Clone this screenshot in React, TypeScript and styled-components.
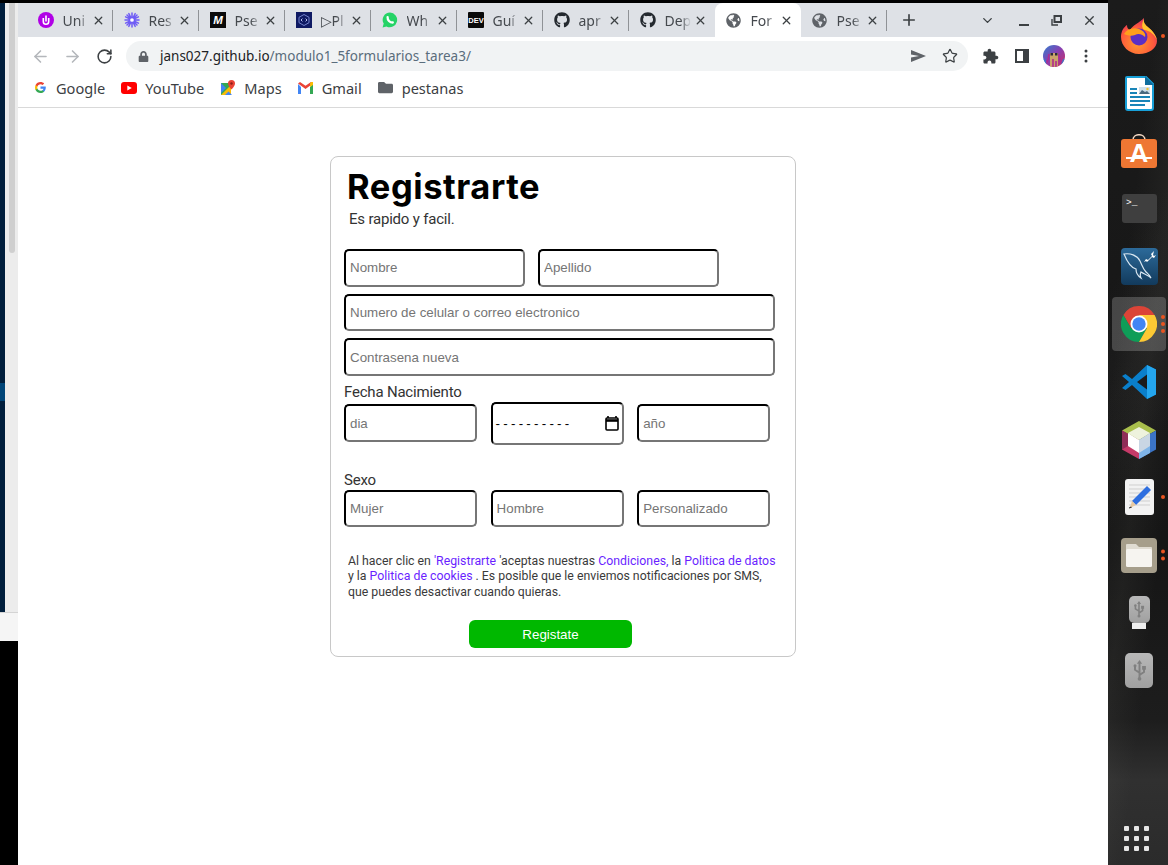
import React, { ReactElement } from 'react';
import styled, { createGlobalStyle } from 'styled-components';
import { ArrowLeft, ArrowRight, ChevronDown, Plus, RotateCw, Star, X } from 'lucide-react';
import { FaFolder, FaGithub, FaGlobeAmericas, FaLock } from 'react-icons/fa';

const GlobalStyle = createGlobalStyle`
  html, body {
    margin: 0;
    height: 100%;
    overflow: hidden;
    background: #fff;
  }

  #root {
    height: 100%;
  }

  * {
    box-sizing: border-box;
  }
`;

const Page = styled.div`
  display: flex;
  height: 865px;
  width: 1168px;
`;

/* window behind the browser, left side */
const LeftEdge = styled.div`
  width: 18px;
  display: flex;
  flex-direction: column;
  background: #000;
  padding-top: 3px;
`;

const BehindWindow = styled.div`
  display: flex;
  height: 609px;
  background: #ececec;
`;

const NavyStrip = styled.div`
  width: 5px;
  background: #001e3c;
  padding-top: 380px;
`;

const NavyHighlight = styled.div`
  height: 18px;
  background: #004578;
`;

const Rail = styled.div`
  flex: 1;
  padding: 0 3px 0 4px;
`;

const RailThumb = styled.div`
  height: 250px;
  background: #cfcfcf;
  border-radius: 0 0 3px 3px;
`;

const BehindFooter = styled.div`
  height: 29px;
  background: #f5f5f5;
  border-top: 1px solid #d4d4d4;
`;

const Browser = styled.div`
  flex: 1;
  min-width: 0;
  display: flex;
  flex-direction: column;
`;

const TopEdge = styled.div`
  height: 3px;
  background: #000;
`;

const TabStrip = styled.div`
  height: 34px;
  display: flex;
  align-items: stretch;
  background: #dee1e6;
  padding-left: 8.5px;
`;

const Tab = styled.div<{ $active?: boolean; $separator?: boolean }>`
  position: relative;
  width: 86px;
  display: flex;
  align-items: center;
  padding-left: 11px;
  background: ${(props) => (props.$active ? '#fff' : 'transparent')};
  border-radius: 8px 8px 0 0;
  color: #45494e;

  &::after {
    content: '';
    display: ${(props) => (props.$separator ? 'block' : 'none')};
    position: absolute;
    right: 0;
    top: 7px;
    bottom: 6px;
    width: 1px;
    background: #8f9296;
  }
`;

const TabIcon = styled.span`
  width: 16px;
  height: 16px;
  flex: none;
  display: flex;
  align-items: center;
  justify-content: center;
`;

const TabTitle = styled.span`
  width: 26px;
  margin-left: 9px;
  overflow: hidden;
  white-space: nowrap;
  font: 14px 'Noto Sans', sans-serif;
  -webkit-mask-image: linear-gradient(to right, #000 60%, transparent 100%);
  mask-image: linear-gradient(to right, #000 60%, transparent 100%);
`;

const TabClose = styled.span`
  display: flex;
  margin-left: 3px;
  color: #3c4043;
`;

const StripButton = styled.div<{ $width: number; $gap?: number }>`
  width: ${(props) => props.$width}px;
  margin-left: ${(props) => props.$gap ?? 0}px;
  display: flex;
  align-items: center;
  justify-content: center;
  color: #3c4043;
`;

const MinimizeGlyph = styled.span`
  width: 10px;
  height: 2px;
  margin-top: 10px;
  background: #3c4043;
`;

const Toolbar = styled.div`
  height: 38px;
  display: flex;
  align-items: center;
  padding-left: 6px;
  background: #fff;
`;

const ToolButton = styled.div<{ $color?: string }>`
  width: 32px;
  height: 32px;
  flex: none;
  display: flex;
  align-items: center;
  justify-content: center;
  color: ${(props) => props.$color ?? '#5f6368'};
`;

const Omnibox = styled.div`
  width: 842px;
  height: 30px;
  margin: 0 6px;
  padding: 0 2px 0 12px;
  display: flex;
  align-items: center;
  border-radius: 15px;
  background: #f1f3f4;
  color: #5f6368;
`;

const Url = styled.div`
  flex: 1;
  margin: 0 0 1px 11px;
  font: 13.5px 'Noto Sans', sans-serif;
  color: #5a6d7c;

  b {
    font-weight: 400;
    color: #202124;
  }
`;

const Bookmarks = styled.div`
  height: 33px;
  display: flex;
  align-items: center;
  gap: 16px;
  padding: 0 0 7px 14px;
  background: #fff;
  border-bottom: 1px solid #d9d9d9;
`;

const Bookmark = styled.div`
  display: flex;
  align-items: center;
  gap: 8px;
  font: 14.6px 'Noto Sans', sans-serif;
  color: #3c4043;
`;

const BookmarkIcon = styled.span`
  width: 16px;
  height: 16px;
  display: flex;
  align-items: center;
  justify-content: center;
  color: #5f6368;
`;

const Content = styled.main`
  flex: 1;
  padding: 48px 0 0 312px;
  background: #fff;
`;

const Card = styled.form`
  width: 466px;
  height: 501px;
  padding: 9px 0 0 13px;
  border: 1px solid #c8c8c8;
  border-radius: 8px;
  background: #fff;
`;

const Title = styled.h1`
  margin: 0 0 0 3px;
  font: 700 34.5px/42px Inter, sans-serif;
  letter-spacing: 0.55px;
  color: #000;
`;

const Subtitle = styled.p`
  margin: 1px 0 0 5px;
  font: 15px/20px Roboto, sans-serif;
  letter-spacing: -0.2px;
  color: #333;
`;

const FieldRow = styled.div<{ $top: number; $gap?: number }>`
  display: flex;
  align-items: flex-start;
  gap: ${(props) => props.$gap ?? 13.6}px;
  margin-top: ${(props) => props.$top}px;
`;

const Field = styled.input<{ $width: number; $height?: number; $lift?: boolean }>`
  width: ${(props) => props.$width}px;
  height: ${(props) => props.$height ?? 38}px;
  padding: ${(props) => (props.$lift ? '0 4px 1px' : '1px 4px')};
  border: 2px inset #767676;
  border-top-color: #222;
  border-left-color: #222;
  border-radius: 5px;
  background: #fff;
  font: 13.33px 'Liberation Sans', Arial, sans-serif;
  color: #000;

  &::placeholder {
    color: #757575;
    opacity: 1;
  }
`;

const DateField = styled.div`
  width: 133px;
  height: 43px;
  margin: -2px 0 -3px;
  padding: 0 3px;
  display: flex;
  align-items: center;
  justify-content: space-between;
  border: 2px inset #767676;
  border-top-color: #222;
  border-left-color: #222;
  border-radius: 5px;
  font: 13.33px 'Liberation Sans', Arial, sans-serif;
  letter-spacing: 3.25px;
  color: #000;
`;

const FieldLabel = styled.div<{ $top: number }>`
  margin-top: ${(props) => props.$top}px;
  font: 15px/20px Roboto, sans-serif;
  letter-spacing: -0.2px;
  color: #333;
`;

const Terms = styled.p`
  margin: 26.5px 0 0 4px;
  font: 12.3px/15.8px Roboto, sans-serif;
  white-space: nowrap;
  color: #3a3a3a;

  a {
    color: #6a1fff;
    text-decoration: none;
  }
`;

const SubmitButton = styled.button`
  display: block;
  width: 163px;
  height: 28px;
  margin: 19.5px 0 0 125px;
  border: 0;
  border-radius: 6px;
  background: #00b800;
  color: #fff;
  font: 13.33px 'Liberation Sans', Arial, sans-serif;
`;

const Dock = styled.aside`
  width: 60px;
  padding: 7px 0 0 4px;
  display: flex;
  flex-direction: column;
  background:
    linear-gradient(97deg, transparent 30%, rgba(130, 130, 120, 0.09) 52%, transparent 72%),
    linear-gradient(118deg, transparent 30%, rgba(120, 120, 120, 0.06) 42%, transparent 55%),
    linear-gradient(to bottom, #1b1b1b 0, #151515 540px, #1d1d1d 720px, #303030 780px, #2b2b2b 100%);
`;

const DockItem = styled.div<{ $active?: boolean }>`
  position: relative;
  flex: none;
  width: 54px;
  height: 57.7px;
  display: flex;
  align-items: center;
  justify-content: center;

  ${(props) =>
    props.$active &&
    `
    &::before {
      content: '';
      position: absolute;
      inset: 2px 0;
      border-radius: 4px;
      background: rgba(255, 255, 255, 0.2);
    }
  `}

  > svg {
    position: relative;
  }
`;

const RunningDots = styled.div`
  position: absolute;
  right: 1px;
  top: 50%;
  transform: translateY(-50%);
  display: flex;
  flex-direction: column;
  gap: 3px;
`;

const RunningDot = styled.span`
  width: 4px;
  height: 4px;
  border-radius: 50%;
  background: #e95420;
`;

const UsbTile = styled.div<{ $width: number; $height: number }>`
  width: ${(props) => props.$width}px;
  height: ${(props) => props.$height}px;
  display: flex;
  align-items: center;
  justify-content: center;
  border-radius: 5px;
  background: linear-gradient(#b8b8b8, #a0a0a0);
`;

const UsbStack = styled.div`
  display: flex;
  flex-direction: column;
  align-items: center;
`;

const UsbTag = styled.div`
  width: 14px;
  height: 6px;
  background: #eee;
`;

const AppGrid = styled.div`
  margin: auto 0 14px 12px;
  width: 30px;
  display: grid;
  grid-template-columns: repeat(3, 5px);
  gap: 5px;
`;

const AppGridDot = styled.span`
  width: 5px;
  height: 5px;
  border-radius: 1px;
  background: #e6e6e6;
`;

const UniIcon = (): ReactElement => (
  <svg width="16" height="16" viewBox="0 0 16 16">
    <circle cx="8" cy="8" r="8" fill="#b000e6" />
    <path d="M5.3 6v3.6a2.7 2.7 0 0 0 5.4 0V6" fill="none" stroke="#fff" strokeWidth="1.6" />
    <path d="M8 3.5v6" stroke="#fff" strokeWidth="1.6" />
  </svg>
);

const BurstIcon = (): ReactElement => (
  <svg width="16" height="16" viewBox="0 0 16 16" stroke="#6f5cf5" strokeWidth="1.5" strokeLinecap="round">
    <path d="M8 1v14M1 8h14M3 3l10 10M13 3L3 13M4.8 1.6l6.4 12.8M11.2 1.6L4.8 14.4M1.6 4.8l12.8 6.4M1.6 11.2l12.8-6.4" />
    <circle cx="8" cy="8" r="2.6" fill="#fff" stroke="#6f5cf5" />
  </svg>
);

const MediumIcon = (): ReactElement => (
  <svg width="16" height="16" viewBox="0 0 16 16">
    <rect width="16" height="16" fill="#0b0b0b" />
    <text x="8" y="12" textAnchor="middle" fontFamily="Liberation Sans" fontStyle="italic" fontWeight="700" fontSize="11.5" fill="#fff">
      M
    </text>
  </svg>
);

const HexIcon = (): ReactElement => (
  <svg width="16" height="16" viewBox="0 0 16 16">
    <rect width="16" height="16" fill="#0f1a63" />
    <path d="M8 2.5l5 2.8v5.4l-5 2.8-5-2.8V5.3z" fill="none" stroke="#7f8fd8" strokeWidth="0.9" />
    <path d="M6.4 6.6L5 8l1.4 1.4M9.6 6.6L11 8 9.6 9.4" fill="none" stroke="#cdd5ff" strokeWidth="0.9" />
  </svg>
);

const WhatsappIcon = (): ReactElement => (
  <svg width="16" height="16" viewBox="0 0 16 16">
    <path d="M8 .6a7.3 7.3 0 0 0-6.3 11L.6 15.4l3.9-1A7.3 7.3 0 1 0 8 .6z" fill="#25d366" />
    <path d="M5.6 5.2c-.2 3 2.1 5.3 5.2 5.3" fill="none" stroke="#fff" strokeWidth="2.3" strokeLinecap="round" />
  </svg>
);

const DevIcon = (): ReactElement => (
  <svg width="16" height="16" viewBox="0 0 16 16">
    <rect width="16" height="16" rx="1" fill="#0a0a0a" />
    <text x="8" y="10.8" textAnchor="middle" fontFamily="Liberation Sans" fontWeight="700" fontSize="7.5" fill="#fff">
      DEV
    </text>
  </svg>
);

const GoogleIcon = (): ReactElement => (
  <svg width="11" height="11" viewBox="0 0 18 18">
    <path fill="#4285F4" d="M17.64 9.2c0-.637-.057-1.251-.164-1.84H9v3.481h4.844c-.209 1.125-.843 2.078-1.796 2.717v2.258h2.908c1.702-1.567 2.684-3.874 2.684-6.615z" />
    <path fill="#34A853" d="M9 18c2.43 0 4.467-.806 5.956-2.18l-2.908-2.259c-.806.54-1.837.86-3.048.86-2.344 0-4.328-1.584-5.036-3.711H.957v2.332C2.438 15.983 5.482 18 9 18z" />
    <path fill="#FBBC05" d="M3.964 10.71c-.18-.54-.282-1.117-.282-1.71s.102-1.17.282-1.71V4.958H.957C.347 6.173 0 7.548 0 9s.348 2.827.957 4.042l3.007-2.332z" />
    <path fill="#EA4335" d="M9 3.58c1.321 0 2.508.454 3.44 1.345l2.582-2.58C13.463.891 11.426 0 9 0 5.482 0 2.438 2.017.957 4.958L3.964 7.29C4.672 5.163 6.656 3.58 9 3.58z" />
  </svg>
);

const YoutubeIcon = (): ReactElement => (
  <svg width="16" height="12" viewBox="0 0 16 12">
    <rect width="16" height="12" rx="3" fill="#f00" />
    <path d="M6.3 3.4L10.8 6 6.3 8.6z" fill="#fff" />
  </svg>
);

const MapsIcon = (): ReactElement => (
  <svg width="16" height="16" viewBox="0 0 16 16">
    <path d="M1 3h10v12H1z" fill="#34a853" />
    <path d="M1 15L11 5v10z" fill="#fbbc04" />
    <path d="M1 3l5 5-5 5z" fill="#4285f4" />
    <path d="M5 15l3.5-3.5 3.5 3.5z" fill="#4285f4" />
    <path d="M11.5 0a3.5 3.5 0 0 0-3.5 3.5C8 6 11.5 9.5 11.5 9.5S15 6 15 3.5A3.5 3.5 0 0 0 11.5 0z" fill="#ea4335" />
    <circle cx="11.5" cy="3.5" r="1.2" fill="#8c1d18" />
  </svg>
);

const GmailIcon = (): ReactElement => (
  <svg width="15" height="12" viewBox="0 0 15 12">
    <path d="M0 2v10h3V5z" fill="#4285f4" />
    <path d="M12 5v7h3V2z" fill="#34a853" />
    <path d="M0 1.5L7.5 7 15 1.5 13 0 7.5 3.8 2 0z" fill="#ea4335" />
    <path d="M12 1.5V5l3-2V1.4A1 1 0 0 0 13 0z" fill="#fbbc04" />
  </svg>
);

const SendIcon = (): ReactElement => (
  <svg width="15" height="12" viewBox="0 0 15 12" fill="currentColor">
    <path d="M0 0l15 6L0 12V7.4L8 6 0 4.6z" />
  </svg>
);

const ExtensionIcon = (): ReactElement => (
  <svg width="17" height="17" viewBox="0 0 24 24" fill="#3c4043">
    <path d="M20.5 11H19V7c0-1.1-.9-2-2-2h-4V3.5C13 2.12 11.88 1 10.5 1S8 2.12 8 3.5V5H4c-1.1 0-1.99.9-1.99 2v3.8H3.5c1.49 0 2.7 1.21 2.7 2.7s-1.21 2.7-2.7 2.7H2V20c0 1.1.9 2 2 2h3.8v-1.5c0-1.49 1.21-2.7 2.7-2.7 1.49 0 2.7 1.21 2.7 2.7V22H17c1.1 0 2-.9 2-2v-4h1.5c1.38 0 2.5-1.12 2.5-2.5S21.88 11 20.5 11z" />
  </svg>
);

const RestoreIcon = (): ReactElement => (
  <svg width="11" height="11" viewBox="0 0 11 11" fill="none" stroke="#3c4043">
    <rect x="3.5" y="1" width="6.5" height="6" strokeWidth="2" />
    <path d="M1 4v6h6" strokeWidth="1.4" />
  </svg>
);

const SidePanelIcon = (): ReactElement => (
  <svg width="14" height="14" viewBox="0 0 14 14">
    <rect x="1" y="1" width="12" height="12" fill="none" stroke="#3c4043" strokeWidth="2" />
    <rect x="8" y="1" width="5" height="12" fill="#3c4043" />
  </svg>
);

const Avatar = (): ReactElement => (
  <svg width="22" height="22" viewBox="0 0 22 22">
    <defs>
      <linearGradient id="avatarFill" x1="0" y1="0" x2="1" y2="1">
        <stop offset="0" stopColor="#2f7fd0" />
        <stop offset="0.5" stopColor="#8a3fb0" />
        <stop offset="1" stopColor="#d0305f" />
      </linearGradient>
      <clipPath id="avatarClip">
        <circle cx="11" cy="11" r="11" />
      </clipPath>
    </defs>
    <g clipPath="url(#avatarClip)">
      <rect width="22" height="22" fill="url(#avatarFill)" />
      <path d="M7 22V8h8v14z" fill="#c9a36a" />
      <path d="M7.5 8H10v2.5H7.5zM12 8h2.5v2.5H12z" fill="#2a2a3a" />
      <path d="M3 19c2-3 3-6 3-10M19 19c-2-3-3-6-3-10M10 22v-8M13 22v-6" stroke="#b02a90" strokeWidth="1.6" fill="none" />
      <path d="M1 14c1 2 2 4 2 7M21 14c-1 2-2 4-2 7" stroke="#2f7fd0" strokeWidth="1.6" fill="none" />
    </g>
  </svg>
);

const KebabIcon = (): ReactElement => (
  <svg width="4" height="14" viewBox="0 0 4 14" fill="#3c4043">
    <circle cx="2" cy="2" r="1.5" />
    <circle cx="2" cy="7" r="1.5" />
    <circle cx="2" cy="12" r="1.5" />
  </svg>
);

const CalendarIcon = (): ReactElement => (
  <svg width="14" height="15" viewBox="0 0 14 15">
    <path d="M3 0v2M11 0v2" stroke="#000" strokeWidth="1.6" />
    <rect x="1" y="2" width="12" height="12" rx="1" fill="none" stroke="#000" strokeWidth="1.6" />
    <path d="M1 4.5h12" stroke="#000" strokeWidth="2.6" />
  </svg>
);

const UsbGlyph = ({ size }: { size: number }): ReactElement => (
  <svg width={size} height={size * 1.4} viewBox="0 0 20 28" fill="none" stroke="#808080" strokeWidth="2.6" strokeLinecap="round">
    <path d="M10 4v19M10 17l-6-4V9M10 20l6-4v-4" />
    <path d="M10 0l3.5 5h-7z" fill="#808080" stroke="none" />
    <circle cx="4" cy="7.5" r="2" fill="#808080" stroke="none" />
    <rect x="13.5" y="8" width="5" height="5" fill="#808080" stroke="none" />
    <circle cx="10" cy="25" r="2.5" fill="#808080" stroke="none" />
  </svg>
);

const FirefoxIcon = (): ReactElement => (
  <svg width="36" height="38" viewBox="0 0 36 38">
    <defs>
      <radialGradient id="ffBody" cx="0.45" cy="0.7" r="0.75">
        <stop offset="0" stopColor="#ff9a2e" />
        <stop offset="0.6" stopColor="#ff5a3c" />
        <stop offset="1" stopColor="#d6206a" />
      </radialGradient>
    </defs>
    <path d="M18 37C8 37 0 29 0 20 0 14 3 10 6 8c0 3 1 4 3 5 3-5 9-7 14-12-1 4 1 7 5 10 5 4 8 9 8 13 0 7-8 13-18 13z" fill="url(#ffBody)" />
    <path d="M23 1c-1 4 1 7 5 10 4 3 7 8 8 12-3-6-7-9-12-10-3-.5-4-5-1-12z" fill="#ffc62e" />
    <circle cx="18" cy="20" r="8.5" fill="#5b2fc4" />
    <path d="M3 17c3-5 9-7 15-5 5 2 7 5 6 8-3-3-7-4-10-2-3 1-7 1-11-1z" fill="#ff9f1c" />
  </svg>
);

const WriterIcon = (): ReactElement => (
  <svg width="29" height="35" viewBox="0 0 29 35">
    <path d="M2 1h19l7 7v24a2 2 0 0 1-2 2H3a2 2 0 0 1-2-2V2a1 1 0 0 1 1-1z" fill="#fff" stroke="#18a0d8" strokeWidth="2" />
    <path d="M20 0l9 9h-9z" fill="#0f6d9e" />
    <path d="M5 12h7v2H5zM5 16h7v2H5zM5 20h20v2H5zM5 24h20v2H5zM5 28h15v2H5z" fill="#1a85b8" />
    <rect x="14" y="11" width="11" height="7" fill="#cfe0ea" />
    <path d="M14 18l3-4 3 2 2-1 3 3z" fill="#4a6a80" />
    <circle cx="22.5" cy="13" r="1.2" fill="#f2c230" />
  </svg>
);

const SoftwareIcon = (): ReactElement => (
  <svg width="36" height="34" viewBox="0 0 36 34">
    <path d="M12 6c0-7 12-7 12 0" fill="none" stroke="#f0d5c0" strokeWidth="1.6" />
    <rect y="5" width="36" height="29" rx="3" fill="#ee7733" />
    <text x="18" y="28" textAnchor="middle" fontFamily="Liberation Sans" fontWeight="700" fontSize="26" fill="#fff">
      A
    </text>
    <path d="M5 24h26" stroke="#fff" strokeWidth="2" />
  </svg>
);

const TerminalIcon = (): ReactElement => (
  <svg width="35" height="29" viewBox="0 0 35 29">
    <rect width="35" height="29" rx="3" fill="#3f3f3f" />
    <text x="4" y="11" fontFamily="Liberation Mono" fontSize="9.5" fill="#fff">
      {'>_'}
    </text>
  </svg>
);

const WorkbenchIcon = (): ReactElement => (
  <svg width="37" height="37" viewBox="0 0 37 37">
    <defs>
      <linearGradient id="wbFill" x1="0" y1="0" x2="0" y2="1">
        <stop offset="0" stopColor="#2c6a9a" />
        <stop offset="1" stopColor="#123a5c" />
      </linearGradient>
    </defs>
    <rect width="37" height="37" rx="4" fill="url(#wbFill)" />
    <path d="M3 6c6-1 13 1 16 7 2 4 3 8 6 11 2 2 4 3 5 6-3-3-7-4-10-6-1 2-1 4 0 6-3-2-5-5-5-9-4-1-8-5-12-15z" fill="none" stroke="#dbe8f2" strokeWidth="1.2" />
    <path d="M33 3l-3 3 1 2-4 4-2-1-2 3 2-1 1 1 5-5 2 1 2-3-2 1-1-1z" fill="#fff" />
  </svg>
);

const ChromeIcon = (): ReactElement => (
  <svg width="36" height="36" viewBox="0 0 36 36">
    <path d="M2.41 9A18 18 0 0 1 33.59 9H18L10.2 22.5z" fill="#db4437" />
    <path d="M2.41 9A18 18 0 0 0 18 36l7.8-13.5H10.2z" fill="#0f9d58" />
    <path d="M33.59 9A18 18 0 0 1 18 36l7.8-13.5L18 9z" fill="#fcc934" />
    <circle cx="18" cy="18" r="8.5" fill="#fff" />
    <circle cx="18" cy="18" r="6.7" fill="#4285f4" />
  </svg>
);

const VscodeIcon = (): ReactElement => (
  <svg width="34" height="34" viewBox="0 0 34 34">
    <path d="M25 0l9 4.5v25L25 34 10 20l-6.5 5L0 23l7-6-7-6 3.5-2L10 14z" fill="#0a7fcb" />
    <path d="M25 0l9 4.5v25L25 34z" fill="#24a6ee" />
    <path d="M25 9.5L15 17l10 7.5z" fill="#1b1b1b" />
  </svg>
);

const NetbeansIcon = (): ReactElement => (
  <svg width="34" height="38" viewBox="0 0 34 38">
    <path d="M17 0l17 9.5L17 19 0 9.5z" fill="#a9bf4c" />
    <path d="M34 9.5v19L17 38V19z" fill="#3b74c6" />
    <path d="M0 9.5v19L17 38V19z" fill="#c53a68" />
    <path d="M0 9.5v19l6-3.5V13z" fill="#8f2d57" />
    <path d="M17 38l11-6V19H17z" fill="#7fb4e8" />
    <path d="M17 6l11 6-11 7-11-7z" fill="#eef2dd" />
    <path d="M6 12l11 7v13L6 25z" fill="#fff" />
    <path d="M28 12v13l-11 7V19z" fill="#c9d6e4" />
  </svg>
);

const EditorIcon = (): ReactElement => (
  <svg width="29" height="36" viewBox="0 0 29 36">
    <rect width="29" height="36" rx="3" fill="#f2f2f2" />
    <path d="M4 6h21M4 10h21M4 14h21M4 18h21M4 22h21M4 26h21" stroke="#cfcfcf" strokeWidth="1" />
    <path d="M22 7l4 4-15 15-4-4z" fill="#2f6fe0" />
    <path d="M7 22l4 4-6 3z" fill="#e8c9a0" />
    <path d="M4 28.5l2-1 1 1-3 1z" fill="#333" />
  </svg>
);

const FilesIcon = (): ReactElement => (
  <svg width="36" height="35" viewBox="0 0 36 35">
    <rect width="36" height="35" rx="4" fill="#a69e8b" />
    <path d="M5 7a1 1 0 0 1 1-1h9l3 3h12a1 1 0 0 1 1 1v4H5z" fill="#e0dcd2" />
    <rect x="5" y="11" width="26" height="18" rx="1.5" fill="#f6f4f0" />
  </svg>
);

const tabs = [
  { title: 'Uni', icon: <UniIcon /> },
  { title: 'Res', icon: <BurstIcon /> },
  { title: 'Pse', icon: <MediumIcon /> },
  { title: '▷Pl', icon: <HexIcon /> },
  { title: 'Wh', icon: <WhatsappIcon /> },
  { title: 'Guí', icon: <DevIcon /> },
  { title: 'apr', icon: <FaGithub size={16} color="#24292f" /> },
  { title: 'Dep', icon: <FaGithub size={16} color="#24292f" /> },
  { title: 'For', icon: <FaGlobeAmericas size={15} color="#5f6368" />, active: true },
  { title: 'Pse', icon: <FaGlobeAmericas size={15} color="#5f6368" /> },
];

const bookmarks = [
  { label: 'Google', icon: <GoogleIcon /> },
  { label: 'YouTube', icon: <YoutubeIcon /> },
  { label: 'Maps', icon: <MapsIcon /> },
  { label: 'Gmail', icon: <GmailIcon /> },
  { label: 'pestanas', icon: <FaFolder size={15} /> },
];

const dockApps = [
  { icon: <FirefoxIcon />, dots: 1 },
  { icon: <WriterIcon />, dots: 0 },
  { icon: <SoftwareIcon />, dots: 0 },
  { icon: <TerminalIcon />, dots: 0 },
  { icon: <WorkbenchIcon />, dots: 0 },
  { icon: <ChromeIcon />, dots: 3, active: true },
  { icon: <VscodeIcon />, dots: 0 },
  { icon: <NetbeansIcon />, dots: 0 },
  { icon: <EditorIcon />, dots: 1 },
  { icon: <FilesIcon />, dots: 2 },
  {
    icon: (
      <UsbStack>
        <UsbTile $width={21} $height={27}>
          <UsbGlyph size={12} />
        </UsbTile>
        <UsbTag />
      </UsbStack>
    ),
    dots: 0,
  },
  {
    icon: (
      <UsbTile $width={28} $height={35}>
        <UsbGlyph size={15} />
      </UsbTile>
    ),
    dots: 0,
  },
];

export default function App(): ReactElement {
  return (
    <Page>
      <GlobalStyle />

      <LeftEdge>
        <BehindWindow>
          <NavyStrip>
            <NavyHighlight />
          </NavyStrip>
          <Rail>
            <RailThumb />
          </Rail>
        </BehindWindow>
        <BehindFooter />
      </LeftEdge>

      <Browser>
        <TopEdge />
        <TabStrip>
          {tabs.map((tab, index) => (
            <Tab key={index} $active={tab.active} $separator={index !== 7 && index !== 8}>
              <TabIcon>{tab.icon}</TabIcon>
              <TabTitle>{tab.title}</TabTitle>
              <TabClose>
                <X size={13} strokeWidth={2.4} />
              </TabClose>
            </Tab>
          ))}
          <StripButton $width={30} $gap={7.5}>
            <Plus size={18} strokeWidth={2.2} />
          </StripButton>
          <StripButton $width={24} $gap={51}>
            <ChevronDown size={15} strokeWidth={2.2} />
          </StripButton>
          <StripButton $width={33} $gap={8}>
            <MinimizeGlyph />
          </StripButton>
          <StripButton $width={33}>
            <RestoreIcon />
          </StripButton>
          <StripButton $width={33}>
            <X size={15} strokeWidth={2.2} />
          </StripButton>
        </TabStrip>

        <Toolbar>
          <ToolButton $color="#b4b7bb">
            <ArrowLeft size={19} strokeWidth={2} />
          </ToolButton>
          <ToolButton $color="#b4b7bb">
            <ArrowRight size={19} strokeWidth={2} />
          </ToolButton>
          <ToolButton $color="#3c4043">
            <RotateCw size={17} strokeWidth={2.2} />
          </ToolButton>
          <Omnibox>
            <FaLock size={11} />
            <Url>
              <b>jans027.github.io</b>/modulo1_5formularios_tarea3/
            </Url>
            <ToolButton>
              <SendIcon />
            </ToolButton>
            <ToolButton>
              <Star size={16} strokeWidth={1.8} color="#3c4043" />
            </ToolButton>
          </Omnibox>
          <ToolButton>
            <ExtensionIcon />
          </ToolButton>
          <ToolButton>
            <SidePanelIcon />
          </ToolButton>
          <ToolButton>
            <Avatar />
          </ToolButton>
          <ToolButton>
            <KebabIcon />
          </ToolButton>
        </Toolbar>

        <Bookmarks>
          {bookmarks.map((bookmark) => (
            <Bookmark key={bookmark.label}>
              <BookmarkIcon>{bookmark.icon}</BookmarkIcon>
              {bookmark.label}
            </Bookmark>
          ))}
        </Bookmarks>

        <Content>
          <Card>
            <Title>Registrarte</Title>
            <Subtitle>Es rapido y facil.</Subtitle>

            <FieldRow $top={20} $gap={13}>
              <Field $width={181} $lift placeholder="Nombre" />
              <Field $width={181} $lift placeholder="Apellido" />
            </FieldRow>
            <FieldRow $top={7}>
              <Field $width={431} $height={37} placeholder="Numero de celular o correo electronico" />
            </FieldRow>
            <FieldRow $top={7}>
              <Field $width={431} placeholder="Contrasena nueva" />
            </FieldRow>

            <FieldLabel $top={6}>Fecha Nacimiento</FieldLabel>
            <FieldRow $top={2}>
              <Field $width={133} placeholder="dia" />
              <DateField>
                ----------
                <CalendarIcon />
              </DateField>
              <Field $width={133} placeholder="año" />
            </FieldRow>

            <FieldLabel $top={28}>Sexo</FieldLabel>
            <FieldRow $top={0}>
              <Field $width={133} $height={37} placeholder="Mujer" />
              <Field $width={133} $height={37} placeholder="Hombre" />
              <Field $width={133} $height={37} placeholder="Personalizado" />
            </FieldRow>

            <Terms>
              Al hacer clic en <a href="#registrarte">'Registrarte </a>'aceptas nuestras{' '}
              <a href="#condiciones">Condiciones,</a> la <a href="#datos">Politica de datos</a>
              <br />y la <a href="#cookies">Politica de cookies</a> . Es posible que le enviemos notificaciones por SMS,
              <br />
              que puedes desactivar cuando quieras.
            </Terms>

            <SubmitButton type="button">Registate</SubmitButton>
          </Card>
        </Content>
      </Browser>

      <Dock>
        {dockApps.map((app, index) => (
          <DockItem key={index} $active={app.active}>
            {app.icon}
            {app.dots > 0 && (
              <RunningDots>
                {Array.from({ length: app.dots }).map((_, dot) => (
                  <RunningDot key={dot} />
                ))}
              </RunningDots>
            )}
          </DockItem>
        ))}
        <AppGrid>
          {Array.from({ length: 9 }).map((_, index) => (
            <AppGridDot key={index} />
          ))}
        </AppGrid>
      </Dock>
    </Page>
  );
}
